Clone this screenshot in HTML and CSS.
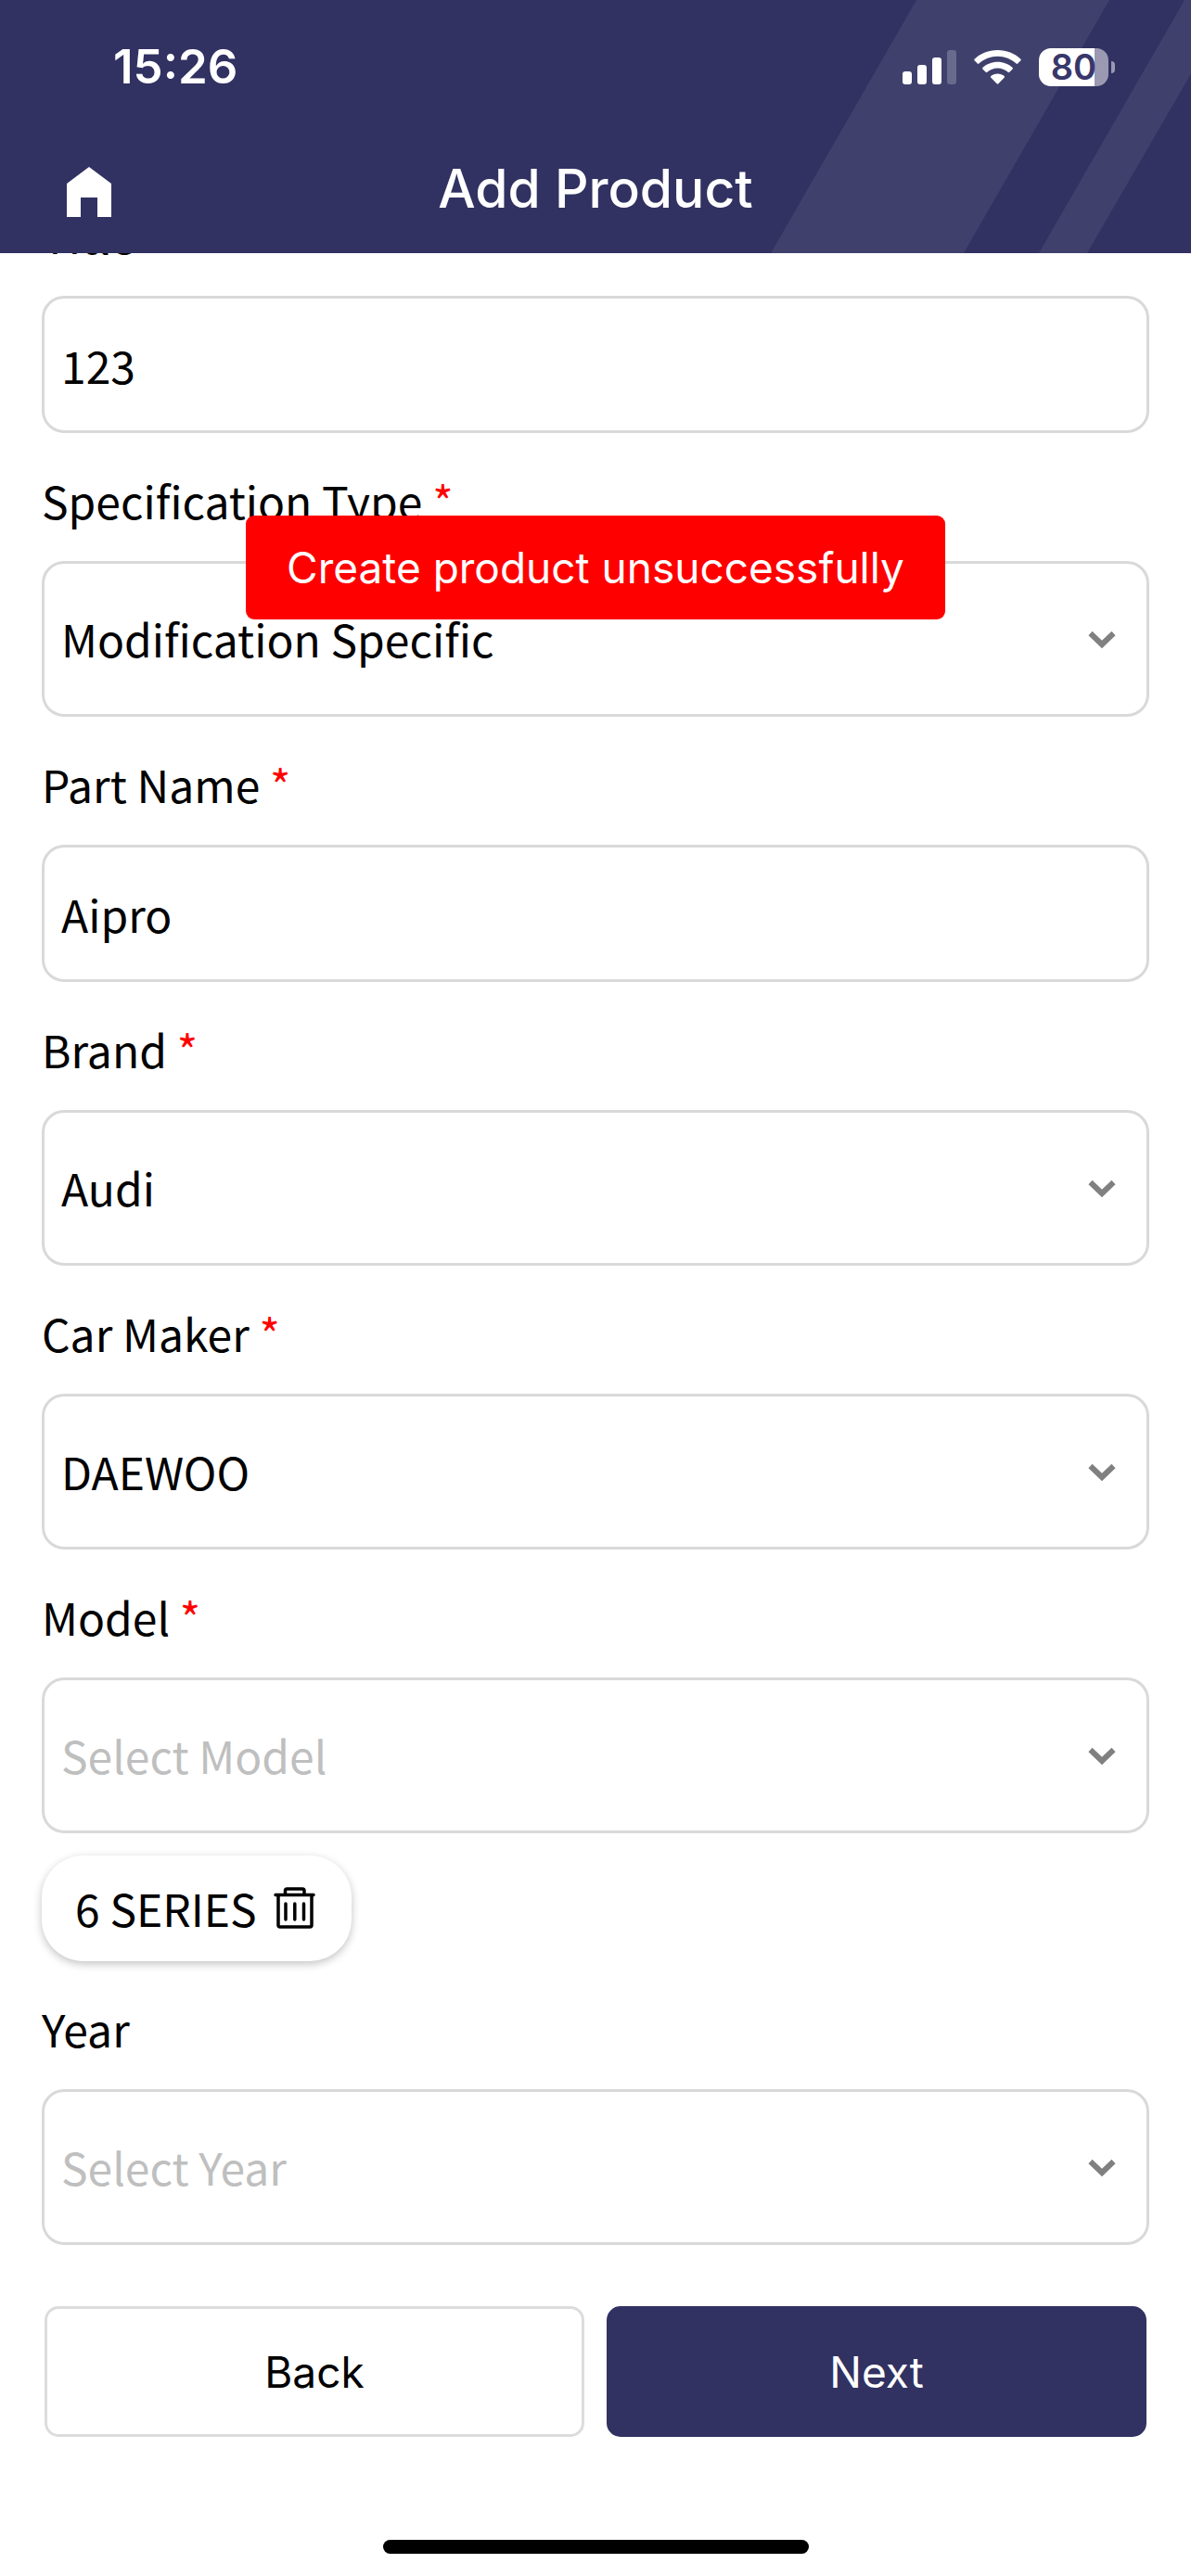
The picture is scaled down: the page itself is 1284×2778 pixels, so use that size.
FILE: index.html
```html
<!DOCTYPE html>
<html lang="en">
<head>
    <meta charset="UTF-8">
    <meta name="viewport" content="width=device-width, initial-scale=1.0">
    <title>Add Product</title>
    <link rel="stylesheet" href="styles.css">
</head>
<body>
    <header class="header">
        <svg class="stripes" width="453" height="273" viewBox="0 0 453 273" aria-hidden="true">
            <path d="M157 0H365L208 273H0Z M446 0H499L341 273H289Z"/>
        </svg>
        <div class="status">
            <span class="time">15:26</span>
            <div class="status-icons">
                <svg width="58" height="37" viewBox="0 0 58 37" fill="#fff" aria-hidden="true">
                    <rect x="0" y="23" width="10" height="14" rx="3"/>
                    <rect x="16" y="16" width="10" height="21" rx="3"/>
                    <rect x="32" y="8" width="10" height="29" rx="3"/>
                    <rect x="48" y="0" width="10" height="37" rx="3" opacity="0.22"/>
                </svg>
                <svg width="51" height="37" viewBox="0 0 51 37" fill="#fff" aria-hidden="true">
                    <path d="M25.5 0C16 0 7 3.500 .6 9.700Q-.2 10.500 .6 11.300L3.800 14.600Q4.600 15.300 5.400 14.600C10.800 9.700 18 6.800 25.500 6.800S40.200 9.700 45.600 14.600Q46.400 15.300 47.200 14.600L50.400 11.300Q51.200 10.500 50.400 9.700C44 3.500 35 0 25.500 0Z"/>
                    <path d="M25.500 12.800C19.300 12.800 13.700 15.100 9.400 18.900Q8.600 19.700 9.400 20.500L12.700 23.800Q13.500 24.500 14.300 23.800C17.300 21.200 21.200 19.600 25.500 19.600S33.700 21.200 36.700 23.800Q37.500 24.500 38.300 23.800L41.600 20.500Q42.400 19.700 41.600 18.900C37.300 15.100 31.700 12.800 25.500 12.800Z"/>
                    <path d="M25.500 25.500C22.700 25.500 20.200 26.500 18.300 28.100Q17.500 28.900 18.300 29.700L24.700 36.300Q25.500 37 26.300 36.300L32.700 29.700Q33.500 28.900 32.700 28.100C30.800 26.500 28.300 25.500 25.500 25.500Z"/>
                </svg>
                <span class="battery">80</span>
            </div>
        </div>
        <div class="nav">
            <a class="home" href="#" aria-label="Home">
                <svg width="48" height="60" viewBox="0 0 48 60" fill="#fff">
                    <path d="M24 6L48 24V60H33V39H15V60H0V24Z"/>
                </svg>
            </a>
            <h1>Add Product</h1>
        </div>
    </header>

    <main class="content">
        <form class="form" id="productForm">
            <label for="title">Title <span class="required">*</span></label>
            <input type="text" id="title" value="123">

            <label for="specType">Specification Type <span class="required">*</span></label>
            <div class="select">
                <select id="specType"><option>Modification Specific</option></select>
                <svg class="chevron" width="30" height="18" viewBox="0 0 30 18"><path d="M2.500 2L15 14L27.500 2"/></svg>
            </div>

            <label for="partName">Part Name <span class="required">*</span></label>
            <input type="text" id="partName" value="Aipro">

            <label for="brand">Brand <span class="required">*</span></label>
            <div class="select">
                <select id="brand"><option>Audi</option></select>
                <svg class="chevron" width="30" height="18" viewBox="0 0 30 18"><path d="M2.500 2L15 14L27.500 2"/></svg>
            </div>

            <label for="carMaker">Car Maker <span class="required">*</span></label>
            <div class="select">
                <select id="carMaker"><option>DAEWOO</option></select>
                <svg class="chevron" width="30" height="18" viewBox="0 0 30 18"><path d="M2.500 2L15 14L27.500 2"/></svg>
            </div>

            <label for="model">Model <span class="required">*</span></label>
            <div class="select">
                <select id="model" class="empty"><option>Select Model</option></select>
                <svg class="chevron" width="30" height="18" viewBox="0 0 30 18"><path d="M2.500 2L15 14L27.500 2"/></svg>
            </div>
            <div class="chip">
                6 SERIES
                <button type="button" class="remove" aria-label="Remove 6 SERIES">
                    <svg width="45" height="48" viewBox="0 0 45 48" fill="none" stroke="#000" stroke-width="3.500" stroke-linecap="round" stroke-linejoin="round">
                        <path d="M2 10.500H43M5 10.500V43Q5 45 7 45H39Q41 45 41 43V10.500M12.500 10V6Q12.500 4 14.500 4H31Q33 4 33 6V10M13 20V37M22.800 20V37M32.500 20V37"/>
                    </svg>
                </button>
            </div>

            <label for="year">Year</label>
            <div class="select">
                <select id="year" class="empty"><option>Select Year</option></select>
                <svg class="chevron" width="30" height="18" viewBox="0 0 30 18"><path d="M2.500 2L15 14L27.500 2"/></svg>
            </div>
        </form>
    </main>

    <div class="actions">
        <button type="button" class="back">Back</button>
        <button type="submit" class="next" form="productForm">Next</button>
    </div>
    <div class="home-indicator"></div>

    <div class="toast" role="alert">Create product unsuccessfully</div>
</body>
</html>
```
FILE: styles.css
```css
* {
    box-sizing: border-box;
}
body {
    margin: 0;
    min-height: 100vh;
    display: flex;
    flex-direction: column;
    background-color: #fff;
    color: #000;
    font-family: "Noto Sans CJK JP", "Noto Sans", sans-serif;
    font-size: 48px;
    line-height: 72px;
}
svg {
    display: block;
}

/* header */
.header {
    position: relative;
    padding-bottom: 9px;
    background-color: #313162;
    color: #fff;
    font-family: Inter, sans-serif;
    overflow: hidden;
}
.stripes {
    position: absolute;
    top: 0;
    right: 0;
    fill: #40406d;
}
.status {
    position: relative;
    display: flex;
    align-items: center;
    justify-content: space-between;
    height: 144px;
    padding: 0 82px 0 122px;
}
.time {
    font-size: 51px;
    font-weight: 600;
}
.status-icons {
    display: flex;
    align-items: center;
    gap: 19px;
}
.battery {
    position: relative;
    width: 75px;
    height: 41px;
    margin-right: 7px;
    border-radius: 13px;
    background: linear-gradient(to right, #fff 80%, #9a99b1 80%);
    color: #38376a;
    font-size: 38px;
    font-weight: 600;
    line-height: 41px;
    text-align: center;
}
.battery::after {
    content: "";
    position: absolute;
    top: 14px;
    right: -7px;
    width: 4px;
    height: 13px;
    border-radius: 0 4px 4px 0;
    background-color: #9a99b1;
}
.nav {
    position: relative;
    display: grid;
    grid-template-columns: 1fr auto 1fr;
    align-items: center;
    height: 120px;
    padding: 0 72px;
}
.home {
    justify-self: start;
}
h1 {
    margin: 0;
    font-size: 57px;
    font-weight: 500;
}

/* form, scrolled a little under the header */
.content {
    overflow: hidden;
    padding: 0 45px;
}
.form {
    margin-top: -92px;
}
label {
    display: block;
    padding: 36px 0 30px;
}
.required {
    color: #f00;
}
input,
select {
    display: block;
    width: 100%;
    height: 148px;
    margin: 0;
    padding: 0 18px;
    border: 3px solid #d9d9d9;
    border-radius: 24px;
    background-color: #fff;
    color: #000;
    font: inherit;
    appearance: none;
}
select {
    height: 168px;
    padding-bottom: 3px;
}
.empty {
    color: #bfbfbf;
}
.select {
    position: relative;
}
.chevron {
    position: absolute;
    top: 76px;
    right: 36px;
    fill: none;
    stroke: #808080;
    stroke-width: 6px;
    overflow: visible;
    pointer-events: none;
}
.chip {
    display: flex;
    align-items: center;
    gap: 18px;
    width: fit-content;
    margin-top: 24px;
    padding: 20px 39px 22px 36px;
    border-radius: 45px;
    background-color: #fff;
    box-shadow: 0 3px 10px rgba(0, 0, 0, 0.24);
}
.remove {
    padding: 0;
    border: none;
    background: none;
    cursor: pointer;
}

/* bottom buttons */
.actions {
    display: flex;
    gap: 24px;
    padding: 66px 48px 0;
}
.back,
.next {
    flex: 1;
    height: 141px;
    border: 3px solid #dcdcdc;
    border-radius: 15px;
    background-color: #fff;
    color: #000;
    font-family: Inter, sans-serif;
    font-size: 46px;
    cursor: pointer;
}
.next {
    border-color: #313162;
    background-color: #313162;
    color: #fff;
}
.home-indicator {
    width: 36%;
    max-width: 459px;
    height: 15px;
    margin: auto auto 24px;
    border-radius: 8px;
    background-color: #000;
}

.toast {
    position: absolute;
    top: 556px;
    left: 50%;
    transform: translateX(-50%);
    padding: 20px 44px;
    border-radius: 9px;
    background-color: #f00;
    color: #fff;
    font-family: Inter, sans-serif;
    font-size: 46px;
    white-space: nowrap;
}
```
